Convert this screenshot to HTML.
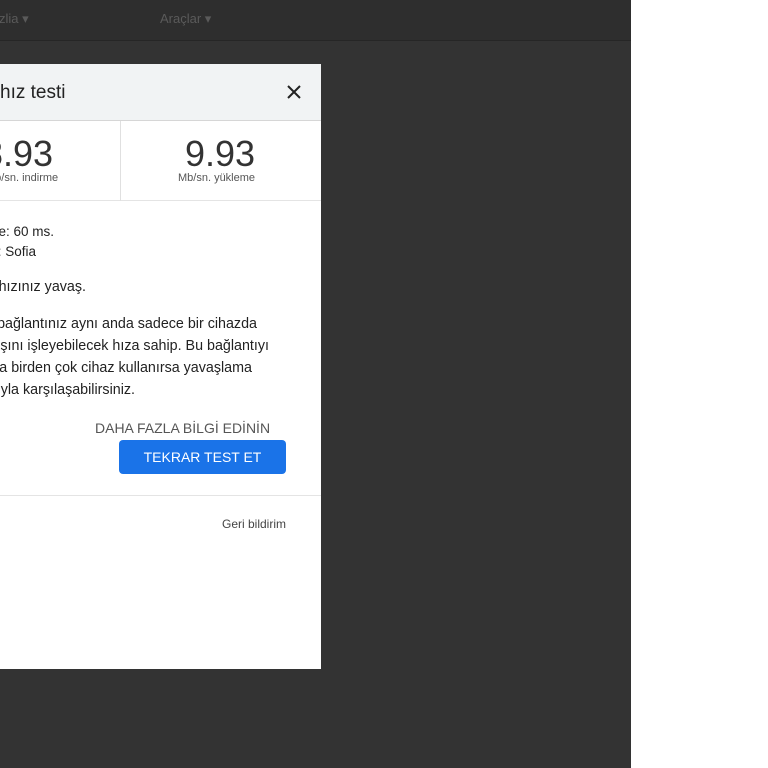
<!DOCTYPE html>
<html><head><meta charset="utf-8"><style>
*{margin:0;padding:0;box-sizing:border-box}
body{width:768px;height:768px;background:#fff;position:relative;overflow:hidden;font-family:"Liberation Sans",Arial,sans-serif}
.dark{position:absolute;left:0;top:0;width:631px;height:768px;background:#333333}
.topbar{position:absolute;left:0;top:0;width:631px;height:41px;background:#2e2e2e;border-bottom:1px solid #262626}
.tb{position:absolute;top:11px;font-size:13px;color:#5a5a5a}
.modal{position:absolute;left:0;top:64px;width:321px;height:605px;background:#fff;overflow:hidden}
.hdr{height:57px;background:#f1f3f4;border-bottom:1px solid #d6d6d6;position:relative}
.hdr span{position:absolute;left:0;top:18px;font-size:19px;color:#222}
.x{position:absolute;left:285px;top:19px;width:18px;height:18px}
.stats{height:80px;border-bottom:1px solid #e4e4e4;position:relative}
.div{position:absolute;left:120px;top:0;width:1px;height:80px;background:#e0e0e0}
.num{position:absolute;font-size:36px;color:#333;top:12px}
.lbl{position:absolute;font-size:11px;color:#555;top:51px}
.t{position:absolute;font-size:13.5px;color:#222;white-space:nowrap}
.p{position:absolute;font-size:14.3px;color:#222;white-space:nowrap}
</style></head><body>
<div class="dark"></div>
<div class="topbar"><span class="tb" style="left:-14px">Gizlia ▾</span><span class="tb" style="left:160px">Araçlar ▾</span></div>
<div class="modal">
<div class="hdr"><span style="left:0px">hız testi</span>
<svg class="x" viewBox="0 0 18 18"><path d="M3 3L15 15M15 3L3 15" stroke="#222" stroke-width="2"/></svg></div>
<div class="stats"><div class="div"></div>
<div class="num" style="left:-17px">8.93</div><div class="lbl" style="left:-14px">Mb/sn. indirme</div>
<div class="num" style="left:185px">9.93</div><div class="lbl" style="left:178px">Mb/sn. yükleme</div>
</div>
<div class="t" style="right:267px;top:160px">Gecikme: 60 ms.</div>
<div class="t" style="right:285px;top:180px">Sunucu: Sofia</div>
<div class="p" style="right:235px;top:215px">Bağlantı hızınız yavaş.</div>
<div class="p" style="right:64px;top:252px">İnternet bağlantınız aynı anda sadece bir cihazda</div>
<div class="p" style="right:52px;top:274px">video akışını işleyebilecek hıza sahip. Bu bağlantıyı</div>
<div class="p" style="right:69px;top:296px">aynı anda birden çok cihaz kullanırsa yavaşlama</div>
<div class="p" style="right:186px;top:318px">sorunlarıyla karşılaşabilirsiniz.</div>
<div class="t" style="left:95px;top:356px;font-size:14px;color:#555">DAHA FAZLA BİLGİ EDİNİN</div>
<div style="position:absolute;left:119px;top:376px;width:167px;height:34px;background:#1a73e8;border-radius:4px;color:#fff;font-size:14px;text-align:center;line-height:34px">TEKRAR TEST ET</div>
<div style="position:absolute;left:0;top:431px;width:321px;height:1px;background:#e4e4e4"></div>
<div class="t" style="left:222px;top:453px;font-size:12px;color:#444">Geri bildirim</div>
</div>
</body></html>
